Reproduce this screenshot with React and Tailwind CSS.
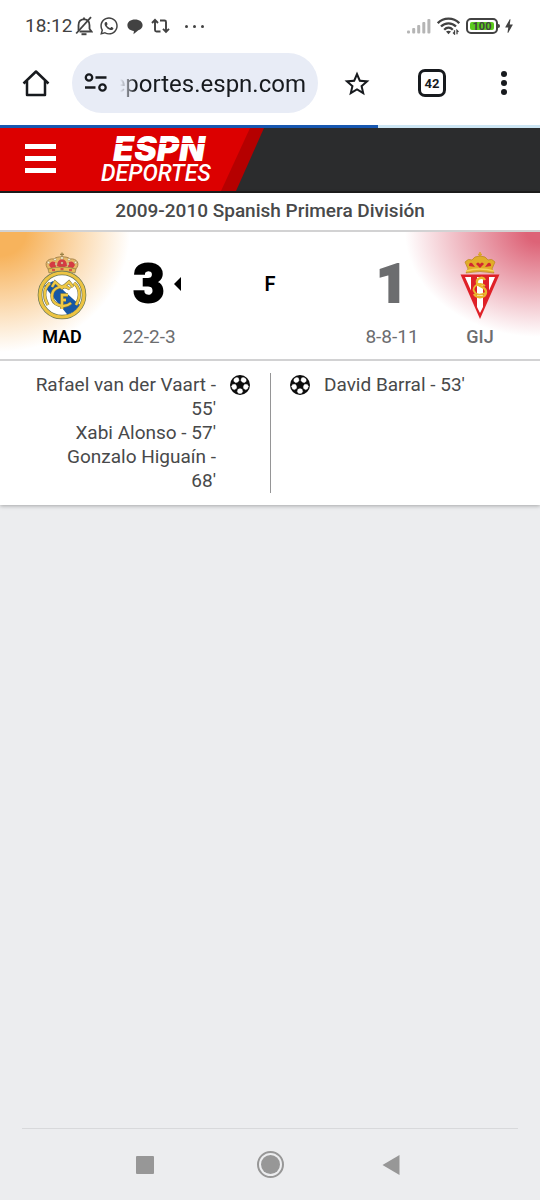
import { FaWhatsapp } from "react-icons/fa";
import { MdStarBorder, MdBolt } from "react-icons/md";

const leftScorers = ["Rafael van der Vaart -\n55'", "Xabi Alonso - 57'", "Gonzalo Higuaín -\n68'"];
const rightScorers = ["David Barral - 53'"];

function StatusBar() {
  return (
    <div className="flex h-[52px] items-center justify-between pl-[25px] pr-[22px] text-[#424242]">
      <div className="flex items-center">
        <span className="text-[19px] leading-6">18:12</span>
        <svg className="ml-[3px] h-5 w-[18px]" viewBox="0 0 18 20" fill="none" stroke="currentColor" strokeWidth="1.8" aria-hidden="true">
          <path d="M3.5 14.6V9.2C3.500 5.500 5.500 3.500 9 3.200C12.500 3.500 14.500 5.500 14.500 9.200V12.800L16.500 15.500H4.500" />
          <path d="M9 1.500V3.500" />
          <path d="M16 1.200L1.200 17.500" />
          <path d="M6.500 18.200H11.500" strokeWidth="2" />
        </svg>
        <FaWhatsapp className="ml-1.5 size-5" aria-hidden="true" />
        <svg className="ml-2 h-[17px] w-4" viewBox="0 0 16 17" fill="currentColor" aria-hidden="true">
          <path d="M8 1.500C3.600 1.500.4 3.900.4 7.200C.4 10.300 3 12.600 6.900 12.900L6.500 16.200L11.300 12.200C14 11.300 15.600 9.500 15.600 7.200C15.600 3.900 12.400 1.500 8 1.500Z" />
        </svg>
        <svg className="ml-2 h-4 w-[19px]" viewBox="0 0 19 16" fill="none" stroke="currentColor" strokeWidth="1.900" aria-hidden="true">
          <path d="M1 5L4 1.900L7 5M4 2.200V12Q4 13.500 5.500 13.500H9.500" />
          <path d="M9 2.500H13.500Q15 2.500 15 4V13.600M12 10.900L15 14L18 10.900" />
        </svg>
        <span className="ml-[15px] flex gap-[5px]">
          <i className="size-[3px] rounded-full bg-current" />
          <i className="size-[3px] rounded-full bg-current" />
          <i className="size-[3px] rounded-full bg-current" />
        </span>
      </div>
      <div className="flex items-center">
        <svg className="h-4 w-6" viewBox="0 0 24 16" fill="#b5b5b5" aria-hidden="true">
          <rect x="0" y="12.500" width="3" height="3" rx="1" />
          <rect x="5.200" y="10" width="3" height="5.500" rx="1" />
          <rect x="10.200" y="7" width="3" height="8.500" rx="1" />
          <rect x="15.300" y="4" width="3" height="11.500" rx="1" />
          <rect x="20.400" y="1" width="3" height="14.500" rx="1" />
        </svg>
        <svg className="ml-1.5 h-[18px] w-[23px]" viewBox="0 0 23 18" fill="none" stroke="currentColor" strokeWidth="2.300" aria-hidden="true">
          <path d="M.8 6.200C6.500.2 16.500.2 22.200 6.200" />
          <path d="M4 9.500C8 5.300 15 5.300 19 9.500" />
          <path d="M7.200 12.700C9.800 10.100 13.200 10.100 15.800 12.700" />
          <path d="M9 14.500Q11.500 12.800 14 14.500L11.500 17.300Z" fill="currentColor" stroke="none" />
          <path d="M17.500 13.200V17L16 15.500M20 17.200V13.400L21.500 14.900" strokeWidth="1.300" />
        </svg>
        <span className="ml-1.5 flex items-center">
          <span className="flex h-4 w-8 items-center rounded-[5px] border-2 border-[#424242] p-0.5">
            <span className="flex h-full w-full items-center justify-center rounded-[2px] bg-[#5ccb1e] text-[11px] font-bold leading-none">100</span>
          </span>
          <i className="h-1 w-0.5 rounded-r bg-[#424242]" />
        </span>
        <MdBolt className="size-[18px]" aria-hidden="true" />
      </div>
    </div>
  );
}

function BrowserBar() {
  return (
    <div className="flex h-[73px] items-start pl-[22px] pr-7 text-[#171a1e]">
      <button type="button" aria-label="Home" className="flex h-[62px] items-center">
        <svg className="size-7" viewBox="0 0 28 28" fill="none" stroke="currentColor" strokeWidth="2.500" strokeLinejoin="round" aria-hidden="true">
          <path d="M1.500 14.500L14 2.500L26.500 14.500M5 11.500V26H23V11.500" />
        </svg>
      </button>
      <div className="ml-[22px] mt-px flex h-[60px] min-w-0 flex-1 items-center rounded-full bg-[#e8ecf6] pl-3 pr-3">
        <svg className="h-5 w-6 shrink-0" viewBox="0 0 24 20" fill="none" stroke="currentColor" strokeWidth="2.300" aria-hidden="true">
          <circle cx="5" cy="4.500" r="3.200" />
          <path d="M11.500 4.500H22.500M1 14.500H11.500" />
          <circle cx="18.500" cy="14.500" r="3.200" />
        </svg>
        <div className="ml-3 flex min-w-0 flex-1 justify-end overflow-hidden pt-0.5 [mask-image:linear-gradient(to_right,transparent,black_16px)]">
          <span className="whitespace-nowrap text-[24px] leading-8">eportes.espn.com</span>
        </div>
      </div>
      <button type="button" aria-label="Bookmark" className="ml-6 flex h-16 items-center">
        <MdStarBorder className="size-[30px]" aria-hidden="true" />
      </button>
      <button type="button" aria-label="42 open tabs" className="ml-[46px] flex h-[62px] items-center">
        <span className="flex size-7 items-center justify-center rounded-[7px] border-[3px] border-current text-[13px] font-bold leading-none">42</span>
      </button>
      <button type="button" aria-label="Menu" className="ml-[50px] flex h-[62px] w-4 flex-col items-center justify-center gap-[3px]">
        <i className="size-1.5 rounded-full bg-current" />
        <i className="size-1.5 rounded-full bg-current" />
        <i className="size-1.5 rounded-full bg-current" />
      </button>
    </div>
  );
}

function SiteHeader() {
  return (
    <header className="h-[65px] border-b-2 border-[#1c1c1d] bg-[#2b2c2d]">
      <div className="h-full w-[264px] bg-[#b50000] [clip-path:polygon(0_0,100%_0,236px_100%,0_100%)]">
        <div className="flex h-full w-[250px] items-start bg-[#dc0000] pl-[25px] [clip-path:polygon(0_0,100%_0,221px_100%,0_100%)]">
          <button type="button" aria-label="Open navigation" className="mt-4 flex w-[31px] flex-col gap-[7px]">
            <i className="h-[5px] bg-white" />
            <i className="h-[5px] bg-white" />
            <i className="h-[5px] bg-white" />
          </button>
          <a href="#home" className="relative ml-[45px] mt-1.5 block text-white">
            <span className="block pl-3 font-['Inter',sans-serif] text-[34px] font-black italic leading-[29px]">ESPN</span>
            <i className="absolute left-0 top-[9px] h-px w-full bg-[#dc0000]" />
            <span className="block text-[23px] font-medium italic leading-[22px]">DEPORTES</span>
          </a>
        </div>
      </div>
    </header>
  );
}

function MadridCrest() {
  return (
    <svg className="h-[68px] w-[50px]" viewBox="0 0 50 68" fill="none" role="img" aria-label="Real Madrid">
      <defs>
        <clipPath id="field"><circle cx="25" cy="43" r="20" /></clipPath>
      </defs>
      <path d="M12 18C6 12 10 6 17 7C19 4 31 4 33 7C40 6 44 12 38 18Z" fill="#e6b866" stroke="#a9854b" />
      <path d="M12 13Q14 8 18 10L19 15L14 16ZM20 14Q20 8 25 7Q30 8 30 14L25 16ZM38 13Q36 8 32 10L31 15L36 16Z" fill="#d43b43" />
      <g fill="#fff4dc" stroke="#9a8756" strokeWidth=".5">
        <circle cx="25" cy="6" r="1.400" /><circle cx="18" cy="7.500" r="1.200" /><circle cx="32" cy="7.500" r="1.200" />
        <circle cx="11.500" cy="10.500" r="1.200" /><circle cx="38.500" cy="10.500" r="1.200" />
        <circle cx="19" cy="12" r="1" /><circle cx="31" cy="12" r="1" /><circle cx="25" cy="11" r="1" />
      </g>
      <path d="M25 .5V5M23 2.300H27" stroke="#998146" strokeWidth="1.200" />
      <path d="M11 17Q25 13 39 17L38 21Q25 17 12 21Z" fill="#e8bd54" stroke="#8c7a43" strokeWidth=".7" />
      <path d="M15 18H18M23.500 17H26.500M32 18H35" stroke="#cf3240" strokeWidth="1.500" />
      <circle cx="25" cy="43" r="22" fill="white" stroke="#687657" strokeWidth="4.600" />
      <circle cx="25" cy="43" r="22" stroke="#edc442" strokeWidth="3.200" />
      <g clipPath="url(#field)"><path d="M7 34L16 29L46 56L34 67Z" fill="#1758a5" /></g>
      <g stroke="#77744a" strokeWidth="3.400">
        <path d="M11 53C5 43 8 35 13 31M39 53C45 43 42 35 37 31" />
        <path d="M15 35L18 30L25 36L32 30L36 35" />
        <path d="M33 37C27 32 15 35 15 44C15 53 27 57 34 51" />
        <path d="M25 57V43H31M25 48H29" />
      </g>
      <g stroke="#f0c944" strokeWidth="2.300">
        <path d="M11 53C5 43 8 35 13 31M39 53C45 43 42 35 37 31" />
        <path d="M15 35L18 30L25 36L32 30L36 35" />
        <path d="M33 37C27 32 15 35 15 44C15 53 27 57 34 51" />
        <path d="M25 57V43H31M25 48H29" />
      </g>
    </svg>
  );
}

function GijonCrest() {
  return (
    <svg className="h-[68px] w-10" viewBox="0 0 40 68" fill="none" role="img" aria-label="Sporting Gijón">
      <path d="M20 0V6M18 2.500H22" stroke="#dba629" strokeWidth="1.600" />
      <path d="M8 17L5 10Q8 6 12 8Q14 4 20 4Q26 4 28 8Q32 6 35 10L32 17L34 21Q20 18 6 21Z" fill="#e2ad29" stroke="#b98524" strokeWidth=".7" />
      <path d="M9 14Q9 10 12 11L15 15ZM16 12Q18 9 20 12Q22 9 24 12L20 16ZM31 14Q31 10 28 11L25 15Z" fill="#d22730" />
      <path d="M6 19Q20 15 34 19" stroke="#f4d35b" strokeWidth="1.500" />
      <path d="M.5 22.500H39.500L20 67Z" fill="#df2128" />
      <path d="M5 25H11V38.500ZM17 25H23V55L20 61L17 55ZM29 25H35L29 38.500Z" fill="white" />
      <g stroke="#e9b62d" strokeWidth="2.400">
        <path d="M25 28C23 24 16 26 17 31C18 35 26 34 26 40C26 46 17 47 14 42" />
        <path d="M25 34C19 29 12 35 14 39C16 44 22 43 25 41" strokeWidth="1.900" />
      </g>
    </svg>
  );
}

function SoccerBall() {
  return (
    <svg className="mt-0.5 size-5 shrink-0" viewBox="0 0 20 20" aria-hidden="true">
      <circle cx="10" cy="10" r="10" fill="#0b0b0b" />
      <g fill="white">
        {[0, 72, 144, 216, 288].map((angle) => (
          <path key={angle} transform={`rotate(${angle} 10 10)`} d="M7.900 14.300L10 13.600L12.100 14.300L12.800 16.800L11.300 18.400H8.700L7.200 16.800Z" stroke="white" strokeWidth=".3" strokeLinejoin="round" />
        ))}
      </g>
    </svg>
  );
}

function Scoreboard() {
  return (
    <section className="grid h-[131px] grid-cols-[1fr_auto_1fr] border-y-2 border-[#d2d2d3] bg-[radial-gradient(ellipse_130px_120px_at_0_0,#f7b35c_20%,transparent),radial-gradient(ellipse_135px_105px_at_100%_0,#dd6377_10%,transparent)] px-[37px] pt-5">
      <div className="flex">
        <div className="flex w-[50px] flex-col items-center">
          <MadridCrest />
          <span className="mt-[5px] text-[18px] font-semibold leading-6 text-black">MAD</span>
        </div>
        <div className="ml-[31px] flex w-[62px] flex-col items-center">
          <div className="grid h-16 grid-cols-[7px_auto_7px] items-center gap-[9px]">
            <span className="col-start-2 text-[54px] font-black leading-none text-black [-webkit-text-stroke:2px_currentColor]">3</span>
            <svg className="h-3.5 w-[7px]" viewBox="0 0 7 14" aria-label="Winner"><path d="M7 0V14L0 7Z" /></svg>
          </div>
          <span className="mt-[9px] whitespace-nowrap text-[19px] leading-6 text-[#6c6d6f]">22-2-3</span>
        </div>
      </div>
      <div className="flex h-16 items-center text-[20px] font-semibold text-black">F</div>
      <div className="flex justify-end pr-[3px]">
        <div className="mr-[37px] flex w-[62px] flex-col items-center">
          <span className="flex h-16 items-center text-[54px] font-black leading-none text-[#6c6d6f] [-webkit-text-stroke:2px_currentColor]">1</span>
          <span className="mt-[9px] whitespace-nowrap text-[19px] leading-6 text-[#6c6d6f]">8-8-11</span>
        </div>
        <div className="flex w-10 flex-col items-center">
          <GijonCrest />
          <span className="mt-[5px] text-[18px] font-medium leading-6 text-[#6c6d6f]">GIJ</span>
        </div>
      </div>
    </section>
  );
}

export default function App() {
  return (
    <div className="flex min-h-screen flex-col bg-[#ecedef] font-['Roboto',sans-serif]">
      <div className="bg-white">
        <StatusBar />
        <BrowserBar />
        <div className="h-[3px] bg-[#cce5f3]"><div className="h-full w-[70%] bg-[#1757b0]" /></div>
      </div>
      <SiteHeader />
      <main className="bg-white shadow-[0_1px_4px_rgba(0,0,0,0.3)]">
        <h1 className="flex h-[37px] items-center justify-center text-[19px] font-medium text-[#48494a]">2009-2010 Spanish Primera División</h1>
        <Scoreboard />
        <section className="grid grid-cols-2 py-3 text-[19px] leading-6 text-[#48494a]">
          <div className="flex justify-end gap-3.5 pl-[35px] pr-5">
            <ul className="flex-1 whitespace-pre-line text-right">
              {leftScorers.map((name) => <li key={name}>{name}</li>)}
            </ul>
            <SoccerBall />
          </div>
          <div className="flex gap-3.5 border-l border-[#959596] pl-[19px] pr-[35px]">
            <SoccerBall />
            <ul className="flex-1">
              {rightScorers.map((name) => <li key={name}>{name}</li>)}
            </ul>
          </div>
        </section>
      </main>
      <nav aria-label="System" className="mx-[22px] mt-auto flex h-[72px] items-center justify-between border-t border-[#d8d9db] px-[114px] text-[#979797]">
        <button type="button" aria-label="Recent apps" className="flex w-[22px]">
          <i className="size-[18px] rounded-[1px] bg-current" />
        </button>
        <button type="button" aria-label="Home screen" className="flex size-[27px] items-center justify-center rounded-full border-2 border-current">
          <i className="size-[19px] rounded-full bg-current" />
        </button>
        <button type="button" aria-label="Back" className="flex w-[22px]">
          <svg className="h-5 w-[18px]" viewBox="0 0 18 20" fill="currentColor" aria-hidden="true"><path d="M17.500 0V20L.5 10Z" /></svg>
        </button>
      </nav>
    </div>
  );
}
